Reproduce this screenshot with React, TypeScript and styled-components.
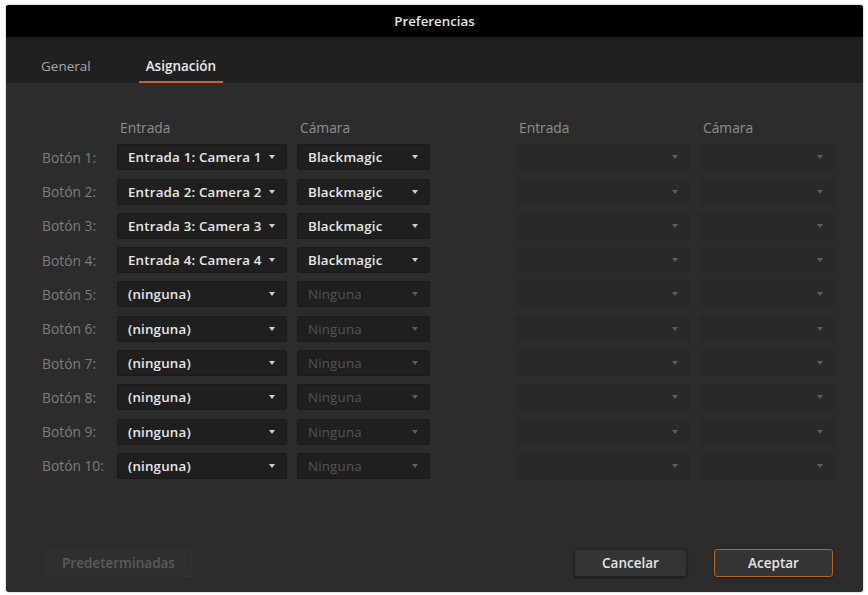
import React from 'react';
import styled, { createGlobalStyle } from 'styled-components';

const GlobalStyle = createGlobalStyle`
  html, body {
    margin: 0;
    padding: 0;
    background: #ffffff;
  }
  body {
    font-family: 'Open Sans', 'Liberation Sans', sans-serif;
  }
`;

const Page = styled.div`
  width: 868px;
  height: 595px;
  padding: 5px 5px 3px 6px;
  box-sizing: border-box;
`;

const Dialog = styled.div`
  height: 100%;
  display: flex;
  flex-direction: column;
  background: #2c2c2c;
  border-radius: 3px;
  overflow: hidden;
  box-shadow: 0 0 2px rgba(0, 0, 0, 0.4);
`;

const TitleBar = styled.div`
  height: 32px;
  background: #000;
  color: #e6e6e6;
  font-size: 13.3px;
  font-weight: 600;
  display: flex;
  align-items: center;
  justify-content: center;
`;

const TabBar = styled.div`
  height: 46px;
  background: #202020;
  display: flex;
  align-items: flex-end;
  padding-left: 28px;
  gap: 20px;
`;

const Tab = styled.div<{ $active?: boolean }>`
  padding: 0 7px 6px;
  font-size: 13.5px;
  font-weight: ${p => (p.$active ? 600 : 400)};
  color: ${p => (p.$active ? '#eaeaea' : '#a8a8a8')};
  border-bottom: 2px solid ${p => (p.$active ? '#c86a1e' : 'transparent')};
  ${p => p.$active && 'margin-left: 21px;'}
`;

const Body = styled.div`
  flex: 1;
  display: flex;
  align-items: flex-start;
  padding: 37px 0 0 36px;
  gap: 86px;
`;

const Group = styled.div<{ $cols: string }>`
  display: grid;
  grid-template-columns: ${p => p.$cols};
  align-content: start;
  column-gap: 10px;
  row-gap: 8.3px;
  align-items: center;
`;

const Header = styled.div`
  font-size: 13.8px;
  color: #8e8e8e;
  padding-left: 3px;
  height: 16px;
  line-height: 16px;
`;

const RowLabel = styled.div`
  font-size: 13.8px;
  color: #7d7d7d;
`;

const Select = styled.div<{ $dim?: boolean; $empty?: boolean }>`
  height: 26px;
  box-sizing: border-box;
  background: ${p => (p.$empty ? '#292929' : '#1f1f1f')};
  border: 1px solid ${p => (p.$empty ? '#282828' : '#1a1a1a')};
  border-radius: 2px;
  display: flex;
  align-items: center;
  justify-content: space-between;
  padding: 0 11px 0 10px;
  font-size: 13.3px;
  letter-spacing: 0.2px;
  font-weight: ${p => (p.$dim ? 400 : 600)};
  color: ${p => (p.$dim ? '#555' : '#e8e8e8')};
  white-space: nowrap;
`;

const Arrow = styled.span<{ $dim?: boolean }>`
  flex: none;
  width: 0;
  height: 0;
  border-left: 3.5px solid transparent;
  border-right: 3.5px solid transparent;
  border-top: 4px solid ${p => (p.$dim ? '#5e5e5e' : '#d0d0d0')};
`;

const Footer = styled.div`
  display: flex;
  align-items: flex-end;
  padding: 0 30px 15px 39px;
`;

const Button = styled.div<{ $variant?: 'disabled' | 'primary'; $w: number }>`
  width: ${p => p.$w}px;
  height: 28px;
  box-sizing: border-box;
  display: flex;
  align-items: center;
  justify-content: center;
  font-size: 13.5px;
  font-weight: 600;
  border-radius: 3px;
  background: ${p => (p.$variant === 'disabled' ? '#2f2f2f' : '#343434')};
  color: ${p => (p.$variant === 'disabled' ? '#5c5c5c' : '#e4e4e4')};
  border: 1px solid
    ${p => (p.$variant === 'primary' ? '#b8651f' : p.$variant === 'disabled' ? '#333' : '#222')};
  box-shadow: ${p => (p.$variant === 'disabled' ? 'none' : '0 1px 2px rgba(0,0,0,0.5)')};
`;

const Spacer = styled.div`
  flex: 1;
`;

const Gap = styled.div`
  width: 27px;
`;

const rows = [
  { input: 'Entrada 1: Camera 1', camera: 'Blackmagic' },
  { input: 'Entrada 2: Camera 2', camera: 'Blackmagic' },
  { input: 'Entrada 3: Camera 3', camera: 'Blackmagic' },
  { input: 'Entrada 4: Camera 4', camera: 'Blackmagic' },
  { input: '(ninguna)', camera: '' },
  { input: '(ninguna)', camera: '' },
  { input: '(ninguna)', camera: '' },
  { input: '(ninguna)', camera: '' },
  { input: '(ninguna)', camera: '' },
  { input: '(ninguna)', camera: '' },
];

const App = () => (
  <Page>
    <GlobalStyle />
    <Dialog>
      <TitleBar>Preferencias</TitleBar>
      <TabBar>
        <Tab>General</Tab>
        <Tab $active>Asignación</Tab>
      </TabBar>
      <Body>
        <Group $cols="65px 170px 133px">
          <div />
          <Header>Entrada</Header>
          <Header>Cámara</Header>
          {rows.map((r, i) => (
            <React.Fragment key={i}>
              <RowLabel>Botón {i + 1}:</RowLabel>
              <Select>
                {r.input}
                <Arrow />
              </Select>
              <Select $dim={!r.camera}>
                {r.camera || 'Ninguna'}
                <Arrow $dim={!r.camera} />
              </Select>
            </React.Fragment>
          ))}
        </Group>
        <Group $cols="174px 135px">
          <Header>Entrada</Header>
          <Header>Cámara</Header>
          {rows.map((_, i) => (
            <React.Fragment key={i}>
              <Select $empty>
                <span />
                <Arrow $dim />
              </Select>
              <Select $empty>
                <span />
                <Arrow $dim />
              </Select>
            </React.Fragment>
          ))}
        </Group>
      </Body>
      <Footer>
        <Button $variant="disabled" $w={147}>Predeterminadas</Button>
        <Spacer />
        <Button $w={113}>Cancelar</Button>
        <Gap />
        <Button $variant="primary" $w={119}>Aceptar</Button>
      </Footer>
    </Dialog>
  </Page>
);

export default App;
